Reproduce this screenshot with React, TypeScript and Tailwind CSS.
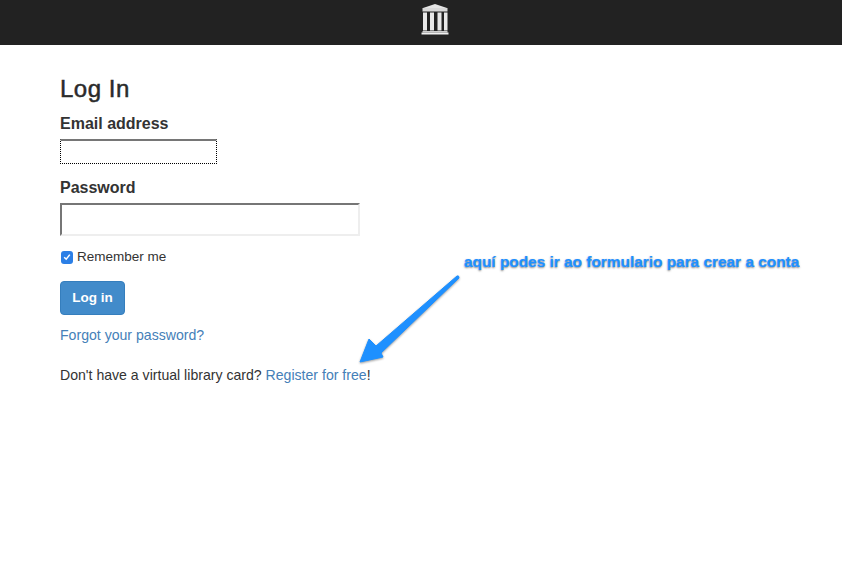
const App = () => {
  return (
    <div className="relative min-h-[566px] bg-white font-['Liberation_Sans',Arial,sans-serif] text-[#333]">
      <header className="flex h-[45px] items-center justify-center bg-[#222]">
        <svg width="28" height="32" viewBox="0 0 28 32" className="mt-[-5px] ml-[27px]">
          <path d="M14 0 L26 4 L2 4 Z" fill="#e4e4e4" />
          <rect x="1.5" y="4" width="25" height="3.5" fill="#d8d8d8" />
          <rect x="2" y="8.5" width="4" height="18" fill="#e8e8e8" />
          <rect x="9" y="8.5" width="4" height="18" fill="#e8e8e8" />
          <rect x="16.5" y="8.5" width="4" height="18" fill="#e8e8e8" />
          <rect x="23" y="8.5" width="3.5" height="18" fill="#e8e8e8" />
          <rect x="1.5" y="27" width="25" height="1.5" fill="#cfcfcf" />
          <rect x="0.5" y="28.5" width="27" height="2" fill="#f0f0f0" />
        </svg>
      </header>

      <main className="pl-[60px] pt-[30px]">
        <h1 className="text-[24px] leading-[28px] font-normal tracking-[0.5px] text-[#2b2b2b] [-webkit-text-stroke:0.5px_#2b2b2b]">Log In</h1>

        <form className="mt-[11px]">
          <label className="block text-[16px] leading-[20px] font-bold">Email address</label>
          <input
            type="text"
            className="mt-[5px] block h-[25px] w-[157px] border border-t-2 border-black border-t-[#767676] border-dotted [border-top-style:solid] bg-white outline-none"
          />

          <label className="mt-[14px] block text-[16px] leading-[20px] font-bold">Password</label>
          <input
            type="password"
            className="mt-[5px] block h-[33px] w-[300px] border-2 border-t-[#767676] border-l-[#767676] border-r-[#eeeeee] border-b-[#eeeeee] bg-white outline-none"
          />

          <label className="mt-[14px] flex items-center gap-[4px] text-[13.5px] leading-[14px]">
            <span className="ml-[1px] flex h-[13px] w-[12px] items-center justify-center rounded-[3px] bg-[#2b7fe6]">
              <svg width="8" height="8" viewBox="0 0 8 8" fill="none">
                <path d="M1.2 4.2 L3.2 6.2 L6.8 1.6" stroke="white" strokeWidth="1.5" />
              </svg>
            </span>
            Remember me
          </label>

          <button
            type="button"
            className="mt-[17px] block h-[34px] w-[65px] rounded-[4px] border border-[#357ebd] bg-[#428bca] pt-[1px] text-[13.5px] font-bold text-white"
          >
            Log in
          </button>
        </form>

        <p className="mt-[10px] text-[14.1px] leading-[20px] text-[#4580b8]">Forgot your password?</p>
        <p className="mt-[20px] text-[14.1px] leading-[20px]">
          Don't have a virtual library card? <span className="text-[#4580b8]">Register for free</span>!
        </p>
      </main>

      {/* annotation on top of the screenshot */}
      <span className="absolute left-[464px] top-[253px] text-[15.4px] leading-[18px] font-bold whitespace-nowrap text-[#1e90ff] [-webkit-text-stroke:0.2px_#1e90ff] [text-shadow:0_1px_2px_rgba(0,0,0,0.5),0_0_2px_rgba(255,255,255,1)]">
        aquí podes ir ao formulario para crear a conta
      </span>
      <svg width="110" height="100" viewBox="0 0 110 100" className="absolute left-[355px] top-[270px] drop-shadow-[0_1px_1px_rgba(0,0,0,0.4)]">
        <path
          d="M5 92 L14 69 L21 76 L102 6 Q104 5 104 8 L26 83 L28 87 Z"
          fill="#1e90ff"
          stroke="#1e90ff"
          strokeLinejoin="round"
        />
      </svg>
    </div>
  );
};

export default App;
